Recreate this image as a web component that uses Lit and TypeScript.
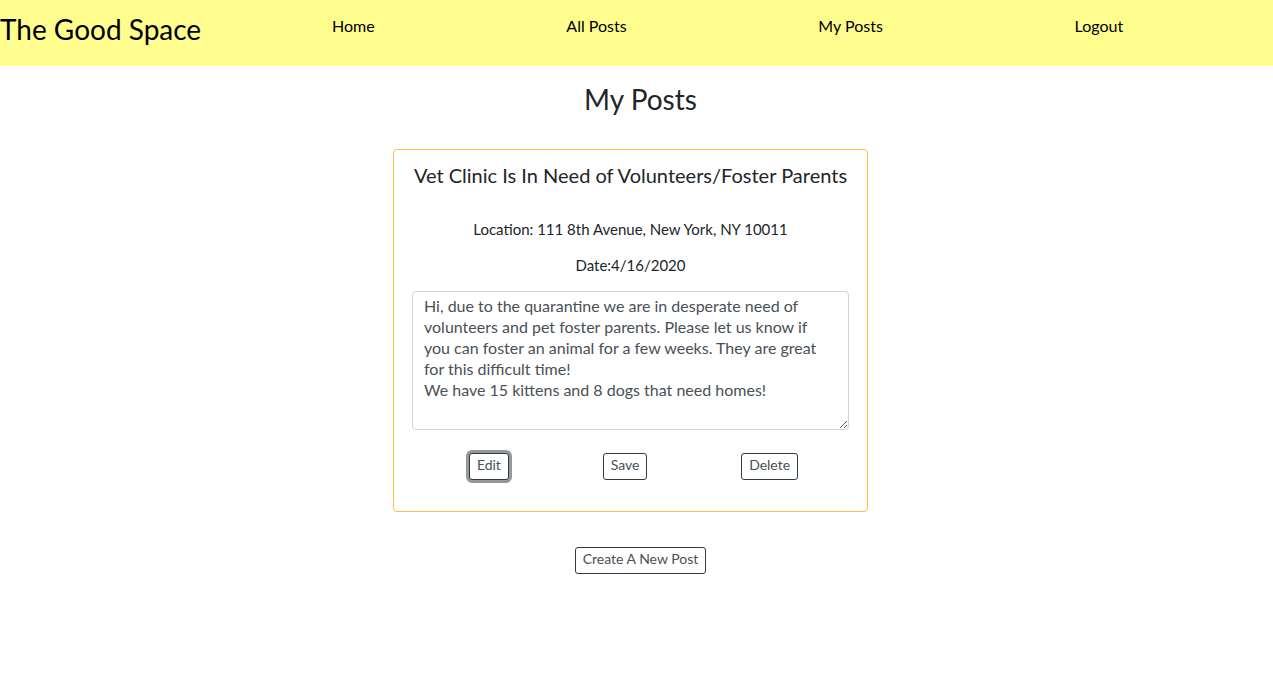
import { LitElement, html, css } from "lit";
import { customElement, state } from "lit/decorators.js";

@customElement("app-root")
export class AppRoot extends LitElement {
  static styles = css`
    :host {
      display: block;
      font-family: Lato, "Open Sans", sans-serif;
      font-size: 15px;
      line-height: 21px;
      color: #212529;
    }
    * {
      box-sizing: border-box;
    }
    h1, h2, h3, p, ul {
      margin: 0;
      padding: 0;
      font-weight: 400;
    }
    .header {
      display: flex;
      align-items: flex-start;
      min-height: 66px;
      padding-top: 11px;
      background: #fffd8e;
      color: #000;
    }
    .brand {
      font-size: 28px;
      line-height: 36px;
      white-space: nowrap;
    }
    .nav {
      flex: 1;
      padding: 4px 54px 0 35px;
      font-size: 16px;
    }
    .links {
      display: flex;
      justify-content: space-around;
      list-style: none;
    }
    .link {
      color: #000;
      text-decoration: none;
    }
    .main {
      display: flex;
      flex-direction: column;
      align-items: center;
      padding-left: 8px;
    }
    .title {
      margin-top: 15px;
      font-size: 28px;
      line-height: 36px;
    }
    .card {
      width: 475px;
      max-width: 100%;
      margin: 32px 20px 35px 0;
      padding: 11px 18px 31px;
      border: 1px solid #ffc145;
      border-radius: 4px;
      text-align: center;
    }
    .name {
      font-size: 20px;
      line-height: 28px;
    }
    .location {
      margin-top: 30px;
    }
    .date {
      margin: 15px 0;
    }
    .text {
      display: block;
      width: 100%;
      height: 139px;
      padding: 3px 18px 3px 11px;
      border: 1px solid #ced4da;
      border-radius: 4px;
      background: #fff;
      color: #495057;
      font: inherit;
      font-size: 16px;
      resize: vertical;
    }
    .actions {
      display: flex;
      justify-content: space-around;
      margin-top: 23px;
      padding: 0 4px 0 10px;
    }
    .button {
      height: 27px;
      padding: 0 7px 3px;
      border: 1px solid #343a40;
      border-radius: 3px;
      background: #fff;
      color: #495057;
      font: inherit;
      font-size: 14px;
      line-height: 20px;
    }
    .button.active {
      box-shadow: 0 0 0 3px #95989b;
    }
  `;

  @state() private active = "Edit";

  private links = ["Home", "All Posts", "My Posts", "Logout"];

  private body = `Hi, due to the quarantine we are in desperate need of volunteers and pet foster parents. Please let us know if you can foster an animal for a few weeks. They are great for this difficult time!
We have 15 kittens and 8 dogs that need homes!`;

  render() {
    return html`
      <header class="header">
        <h1 class="brand">The Good Space</h1>
        <nav class="nav">
          <ul class="links">
            ${this.links.map((l) => html`<li><a class="link" href="#">${l}</a></li>`)}
          </ul>
        </nav>
      </header>
      <main class="main">
        <h2 class="title">My Posts</h2>
        <article class="card">
          <h3 class="name">Vet Clinic Is In Need of Volunteers/Foster Parents</h3>
          <p class="location">Location: 111 8th Avenue, New York, NY 10011</p>
          <p class="date">Date:4/16/2020</p>
          <textarea class="text" aria-label="Post text" .value=${this.body}></textarea>
          <div class="actions">
            ${["Edit", "Save", "Delete"].map(
              (a) => html`<button
                type="button"
                class="button ${this.active === a ? "active" : ""}"
                @click=${() => (this.active = a)}
              >${a}</button>`
            )}
          </div>
        </article>
        <button type="button" class="button">Create A New Post</button>
      </main>
    `;
  }
}
